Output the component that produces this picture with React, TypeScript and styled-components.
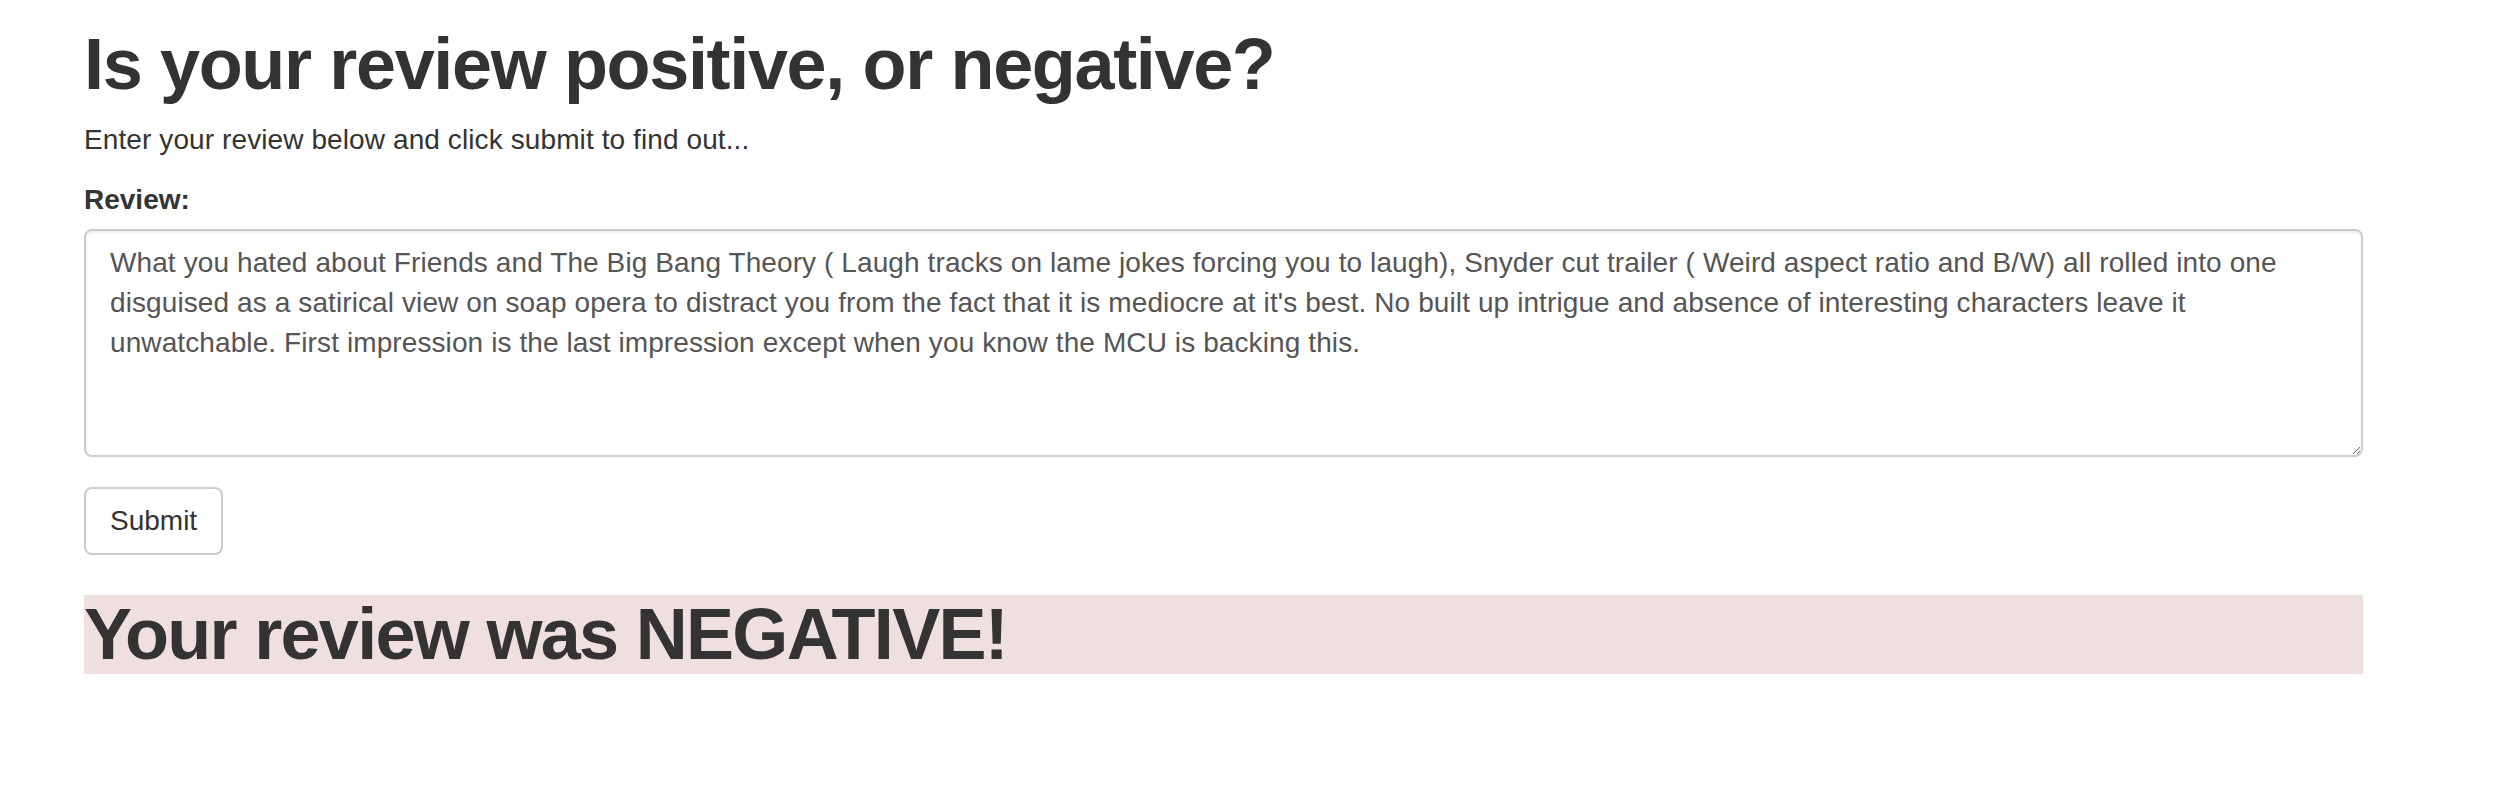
import React from "react";
import styled, { createGlobalStyle } from "styled-components";

const GlobalStyle = createGlobalStyle`
  html, body {
    margin: 0;
    padding: 0;
    background: #ffffff;
  }
  body {
    font-family: "Liberation Sans", Arial, Helvetica, sans-serif;
    font-size: 28px;
    line-height: 40px;
    color: #333333;
  }
  * { box-sizing: border-box; }
`;

const Container = styled.main`
  padding-left: 84px;
  width: 2363px;
`;

const Title = styled.h1<{ $tone?: "plain" | "negative" }>`
  font-size: 72px;
  line-height: 79px;
  font-weight: 700;
  letter-spacing: ${(p) => (p.$tone === "negative" ? "-1.7px" : "-1.35px")};
  margin: ${(p) => (p.$tone === "negative" ? "40px 0 0" : "25px 0 16px")};
  background: ${(p) => (p.$tone === "negative" ? "#efdfdf" : "transparent")};
  color: #333333;
`;

const Intro = styled.p`
  margin: 0 0 20px;
  letter-spacing: 0.1px;
`;

const FormGroup = styled.div`
  margin-bottom: 30px;
`;

const Label = styled.label`
  display: block;
  font-weight: 700;
  margin-bottom: 9px;
`;

const TextArea = styled.textarea`
  display: block;
  width: 100%;
  height: 228px;
  padding: 12px 24px;
  font-family: inherit;
  font-size: 28px;
  line-height: 40px;
  letter-spacing: 0.1px;
  color: #555555;
  background: #ffffff;
  border: 2px solid #cccccc;
  border-radius: 8px;
  box-shadow: inset 0 2px 2px rgba(0, 0, 0, 0.075);
  resize: vertical;
  outline: none;
`;

const Button = styled.button`
  display: inline-block;
  padding: 12px 24px;
  font-family: inherit;
  font-size: 28px;
  line-height: 40px;
  color: #333333;
  background: #ffffff;
  border: 2px solid #cccccc;
  border-radius: 8px;
  cursor: pointer;
`;

const review =
  "What you hated about Friends and The Big Bang Theory ( Laugh tracks on lame jokes forcing you to laugh), Snyder cut trailer ( Weird aspect ratio and B/W) all rolled into one disguised as a satirical view on soap opera to distract you from the fact that it is mediocre at it's best. No built up intrigue and absence of interesting characters leave it unwatchable. First impression is the last impression except when you know the MCU is backing this.";

export default function App() {
  return (
    <>
      <GlobalStyle />
      <Container>
        <Title>Is your review positive, or negative?</Title>
        <Intro>Enter your review below and click submit to find out...</Intro>
        <form onSubmit={(e) => e.preventDefault()}>
          <FormGroup>
            <Label htmlFor="review">Review:</Label>
            <TextArea id="review" rows={5} defaultValue={review} />
          </FormGroup>
          <Button type="submit">Submit</Button>
        </form>
        <Title $tone="negative">Your review was NEGATIVE!</Title>
      </Container>
    </>
  );
}
